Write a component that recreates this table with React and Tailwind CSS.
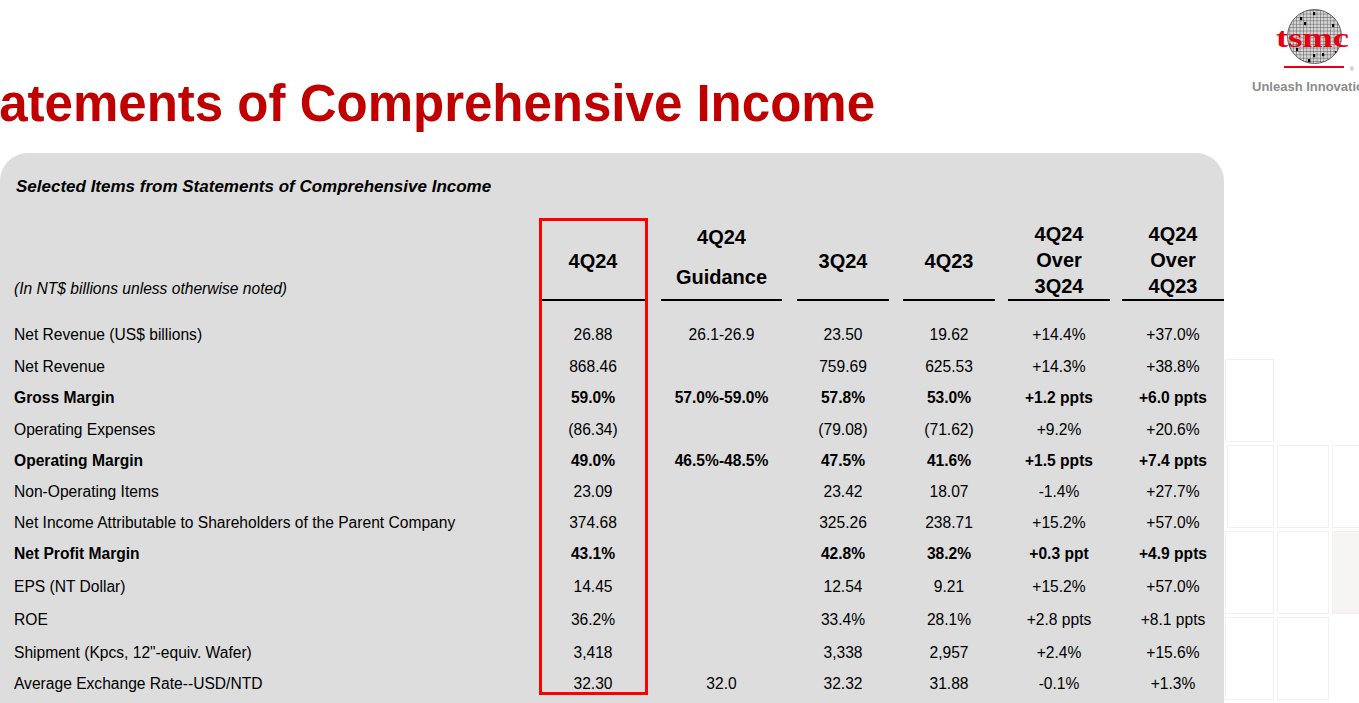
import React from "react";

const columns = [
  { w: "w-[106px]", ml: "" },
  { w: "w-[121px]", ml: "ml-[15px]" },
  { w: "w-[92px]", ml: "ml-[15px]" },
  { w: "w-[92px]", ml: "ml-[14px]" },
  { w: "w-[102px]", ml: "ml-[13px]" },
  { w: "w-[102px]", ml: "ml-[12px]" },
];

const headers = [
  { lines: ["4Q24"], lh: "leading-[26px]", pb: "pb-[25px]" },
  { lines: ["4Q24", "Guidance"], lh: "leading-[40px]", pb: "pb-[2px]" },
  { lines: ["3Q24"], lh: "leading-[26px]", pb: "pb-[25px]" },
  { lines: ["4Q23"], lh: "leading-[26px]", pb: "pb-[25px]" },
  { lines: ["4Q24", "Over", "3Q24"], lh: "leading-[26px]", pb: "pb-0" },
  { lines: ["4Q24", "Over", "4Q23"], lh: "leading-[26px]", pb: "pb-0" },
];

const rows = [
  { label: "Net Revenue (US$ billions)", h: "h-[32px]", values: ["26.88", "26.1-26.9", "23.50", "19.62", "+14.4%", "+37.0%"] },
  { label: "Net Revenue", h: "h-[31px]", values: ["868.46", "", "759.69", "625.53", "+14.3%", "+38.8%"] },
  { label: "Gross Margin", h: "h-[32px]", bold: true, values: ["59.0%", "57.0%-59.0%", "57.8%", "53.0%", "+1.2 ppts", "+6.0 ppts"] },
  { label: "Operating Expenses", h: "h-[31px]", values: ["(86.34)", "", "(79.08)", "(71.62)", "+9.2%", "+20.6%"] },
  { label: "Operating Margin", h: "h-[31px]", bold: true, values: ["49.0%", "46.5%-48.5%", "47.5%", "41.6%", "+1.5 ppts", "+7.4 ppts"] },
  { label: "Non-Operating Items", h: "h-[32px]", values: ["23.09", "", "23.42", "18.07", "-1.4%", "+27.7%"] },
  { label: "Net Income Attributable to Shareholders of the Parent Company", h: "h-[30px]", values: ["374.68", "", "325.26", "238.71", "+15.2%", "+57.0%"] },
  { label: "Net Profit Margin", h: "h-[32px]", bold: true, values: ["43.1%", "", "42.8%", "38.2%", "+0.3 ppt", "+4.9 ppts"] },
  { label: "EPS (NT Dollar)", h: "h-[33px]", values: ["14.45", "", "12.54", "9.21", "+15.2%", "+57.0%"] },
  { label: "ROE", h: "h-[34px]", values: ["36.2%", "", "33.4%", "28.1%", "+2.8 ppts", "+8.1 ppts"] },
  { label: 'Shipment (Kpcs, 12"-equiv. Wafer)', h: "h-[31px]", values: ["3,418", "", "3,338", "2,957", "+2.4%", "+15.6%"] },
  { label: "Average Exchange Rate--USD/NTD", h: "h-[32px]", values: ["32.30", "32.0", "32.32", "31.88", "-0.1%", "+1.3%"] },
];

// little black dies on the wafer
const dies = [
  [48, 17], [52, 22], [61, 12], [80, 24], [61, 54], [70, 53], [83, 51], [56, 59], [73, 61], [44, 48],
];

const TsmcLogo = () => (
  <svg width="107" height="75" viewBox="0 0 107 75">
    <defs>
      <pattern id="wafer" width="3.4" height="3.4" patternUnits="userSpaceOnUse">
        <rect width="3.4" height="3.4" fill="#d6d6d6" />
        <path d="M0 0H3.4M0 0V3.4" stroke="#333" strokeWidth="0.75" />
      </pattern>
      <clipPath id="waferClip">
        <circle cx="62.5" cy="36.5" r="27" />
      </clipPath>
    </defs>
    <circle cx="62.5" cy="36.5" r="27" fill="url(#wafer)" />
    <g clipPath="url(#waferClip)">
      {dies.map(([x, y], i) => (
        <rect key={i} x={x} y={y} width="2.2" height="3.2" fill="#000" />
      ))}
    </g>
    <circle cx="62.5" cy="36.5" r="27" fill="none" stroke="#444" strokeWidth="0.8" />
    <text
      x="24"
      y="47"
      fontFamily="'Liberation Serif', serif"
      fontWeight="700"
      fontSize="28"
      fill="#e60012"
      textLength="73"
      lengthAdjust="spacingAndGlyphs"
    >
      tsmc
    </text>
    <rect x="32" y="66" width="60" height="2" fill="#e60012" />
    <text x="98" y="71" fontFamily="'Liberation Sans', sans-serif" fontSize="5" fill="#777">
      ®
    </text>
  </svg>
);

const Tile = ({ w, grey }) => (
  <div className={`${w} h-[83px] border border-[#f3f1f0] ${grey ? "bg-[#f6f5f4]" : "bg-white"}`} />
);

export default function App() {
  return (
    <div className="w-[1359px] h-[703px] overflow-hidden bg-white text-black font-['Liberation_Sans',Arial,sans-serif]">
      {/* Slide header */}
      <div className="flex h-[153px]">
        <div className="w-[875px] flex justify-end overflow-hidden pt-[78px]">
          <h1 className="whitespace-nowrap text-[51px] leading-[51px] font-bold text-[#c00000]">
            Statements of Comprehensive Income
          </h1>
        </div>
        <div className="ml-auto w-[107px] overflow-hidden">
          <TsmcLogo />
          <div className="mt-[4px] whitespace-nowrap text-[13px] leading-[16px] font-bold text-[#8c8c8c]">
            Unleash Innovation
          </div>
        </div>
      </div>

      <div className="flex">
        {/* Table card */}
        <div className="relative w-[1224px] h-[560px] shrink-0 bg-[#dddddd] rounded-t-[28px]">
          <div className="pt-[23px] pl-[16px] text-[17px] leading-[21px] font-bold italic">
            Selected Items from Statements of Comprehensive Income
          </div>

          {/* Column headers */}
          <div className="flex items-end mt-[13px] h-[91px]">
            <div className="w-[540px] pl-[14px] text-[15.6px] leading-[18px] italic pb-[3px]">
              (In NT$ billions unless otherwise noted)
            </div>
            {headers.map((hd, i) => (
              <div
                key={i}
                className={`${columns[i].w} ${columns[i].ml} ${hd.pb} ${hd.lh} border-b-2 border-black text-center text-[20px] font-bold`}
              >
                {hd.lines.map((l) => (
                  <div key={l}>{l}</div>
                ))}
              </div>
            ))}
          </div>

          {/* Rows */}
          <div className="mt-[18px]">
            {rows.map((r) => (
              <div key={r.label} className={`flex items-center ${r.h} text-[15.6px] ${r.bold ? "font-bold" : ""}`}>
                <div className="w-[540px] pl-[14px] whitespace-nowrap">{r.label}</div>
                {r.values.map((v, i) => (
                  <div key={i} className={`${columns[i].w} ${columns[i].ml} text-center whitespace-nowrap`}>
                    {v}
                  </div>
                ))}
              </div>
            ))}
          </div>

          {/* highlight around the current quarter */}
          <div className="absolute left-[539px] top-[65px] w-[109px] h-[477px] border-[3px] border-[#ff0000] pointer-events-none" />
        </div>

        {/* faint background tiles */}
        <div className="flex flex-col gap-[3px] pt-[206px]">
          <div className="flex gap-[3px] pl-[1px]">
            <Tile w="w-[49px]" />
          </div>
          <div className="flex gap-[3px] pl-[3px]">
            <Tile w="w-[47px]" />
            <Tile w="w-[52px]" />
            <Tile w="w-[40px]" />
          </div>
          <div className="flex gap-[3px] pl-[1px]">
            <Tile w="w-[49px]" />
            <Tile w="w-[52px]" />
            <Tile w="w-[40px]" grey />
          </div>
          <div className="flex gap-[3px] pl-[1px]">
            <Tile w="w-[49px]" />
            <Tile w="w-[52px]" />
          </div>
        </div>
      </div>
    </div>
  );
}
